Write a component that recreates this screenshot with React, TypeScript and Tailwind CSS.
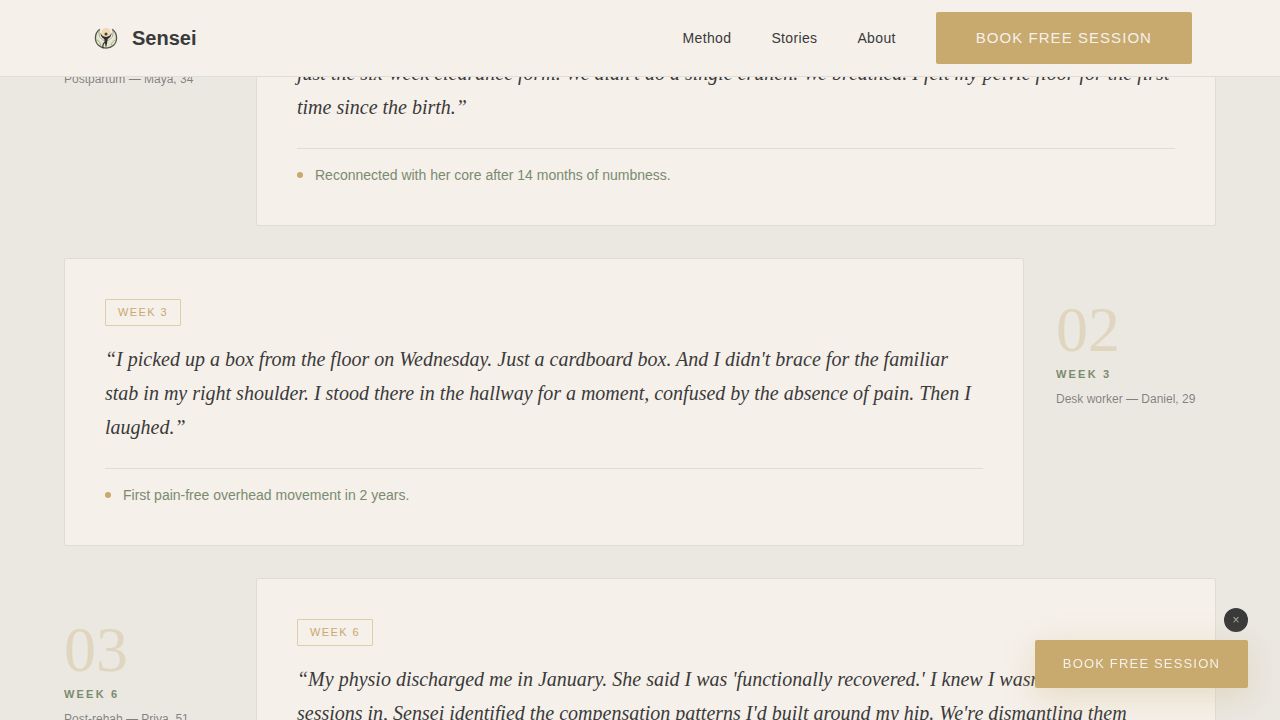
import React, { useState } from "react";

interface Story {
    number: string;
    week: string;
    person: string;
    quote: string;
    outcome: string;
}

const stories: Story[] = [
    {
        number: "01",
        week: "Week 1",
        person: "Postpartum — Maya, 34",
        quote: "For fourteen months nobody had ever really asked me how my body felt. There was no plan, no follow up, just the six-week clearance form. We didn't do a single crunch. We breathed. I felt my pelvic floor for the first time since the birth.",
        outcome: "Reconnected with her core after 14 months of numbness.",
    },
    {
        number: "02",
        week: "Week 3",
        person: "Desk worker — Daniel, 29",
        quote: "I picked up a box from the floor on Wednesday. Just a cardboard box. And I didn't brace for the familiar stab in my right shoulder. I stood there in the hallway for a moment, confused by the absence of pain. Then I laughed.",
        outcome: "First pain-free overhead movement in 2 years.",
    },
    {
        number: "03",
        week: "Week 6",
        person: "Post-rehab — Priya, 51",
        quote: "My physio discharged me in January. She said I was 'functionally recovered.' I knew I wasn't. Seventeen sessions in, Sensei identified the compensation patterns I'd built around my hip. We're dismantling them together.",
        outcome: "Walking without a limp.",
    },
];

const navLinks = [
    { label: "Method", href: "#method" },
    { label: "Stories", href: "#stories" },
    { label: "About", href: "#about" },
];

const Logo: React.FC = () => (
    <svg viewBox="0 0 36 36" className="h-9 w-9" fill="none" aria-hidden="true">
        <circle cx="18" cy="12.5" r="4.5" fill="#ecd09a" opacity="0.7" />
        <path
            d="M11.5 10C6.5 14 6.5 22 10.5 26C12.5 28 15 28.6 18 28.6C21 28.6 23.5 28 25.5 26C29.5 22 29.5 14 24.5 10C27 16.5 25 20.5 20 22L18 25L16 22C11 20.5 9 16.5 11.5 10Z"
            fill="#dfe2c4"
            opacity="0.8"
        />
        <path
            d="M11.5 9.5C6.2 13.5 6.2 21.8 10.8 25.6C14.5 29 21.5 29 25.2 25.6C29.8 21.8 29.8 13.5 24.5 9.5"
            stroke="#55574c"
            strokeWidth="1.3"
            strokeLinecap="round"
        />
        <path
            d="M11.5 9.5C10 14.5 11.5 19 16 20.5M24.5 9.5C26 14.5 24.5 19 20 20.5"
            stroke="#7d8468"
            strokeWidth="0.7"
            strokeLinecap="round"
        />
        <path
            d="M9 20C11 21 12.3 22.5 12.8 25M27 20C25 21 23.7 22.5 23.2 25"
            stroke="#8c9a6b"
            strokeWidth="0.7"
            strokeLinecap="round"
        />
        <circle cx="18" cy="14" r="1.5" fill="#4a4233" />
        <path
            d="M12.5 12.5C13.3 15.3 15.2 16.7 18 17C20.8 16.7 22.7 15.3 23.5 12.5C23.7 15.8 22 17.9 19.8 19L19.2 22.5L18 28L16.8 22.5L16.2 19C14 17.9 12.3 15.8 12.5 12.5Z"
            fill="#2f302b"
        />
        <path
            d="M17.2 22C15 23.5 14.5 25.5 15 28"
            stroke="#2f302b"
            strokeWidth="1.1"
            strokeLinecap="round"
        />
    </svg>
);

const StoryRow: React.FC<{ story: Story; reversed: boolean }> = ({
    story,
    reversed,
}) => (
    <article
        className={`flex gap-8 ${reversed ? "flex-row-reverse" : "flex-row"}`}
    >
        <div className="w-40 shrink-0 pt-10">
            <div className="font-['Liberation_Serif',serif] text-[64px] leading-16 text-[#c8a96e]/30">
                {story.number}
            </div>
            <div className="mt-1 text-[11px] leading-4 font-bold tracking-[0.2em] text-[#7a8b6f] uppercase">
                {story.week}
            </div>
            <div className="mt-2 text-xs leading-[18px] text-[#3a3a3a]/60">
                {story.person}
            </div>
        </div>

        <div className="min-w-0 flex-1 rounded-xs border border-[#e1ddd6] bg-[#f5f0ea] p-10">
            <div className="flex">
                <span className="rounded-[1px] border border-[#c8a96e]/50 px-3 py-1 text-[11px] leading-[17px] tracking-[0.13em] text-[#c8a96e] uppercase">
                    {story.week}
                </span>
            </div>
            <blockquote className="mt-4 font-['Liberation_Serif',serif] text-xl leading-[34px] text-[#3a3a3a] italic">
                {`“${story.quote}”`}
            </blockquote>
            <div className="mt-6 flex items-center gap-3 border-t border-[#e1ddd6] pt-4 text-sm leading-5 text-[#7a8b6f]">
                <span className="h-1.5 w-1.5 rounded-full bg-[#c8a96e]" />
                <p>{story.outcome}</p>
            </div>
        </div>
    </article>
);

const App: React.FC = () => {
    const [showCta, setShowCta] = useState(true);

    return (
        <div className="h-screen overflow-hidden bg-[#ebe8e2] font-['Liberation_Sans',Arial,sans-serif] text-[#3a3a3a]">
            <header className="fixed inset-x-0 top-0 z-10 border-b border-[#e1ddd6] bg-[#f5f0ea]">
                <div className="mx-auto flex max-w-6xl items-center justify-between px-6 py-3">
                    <a href="#top" className="flex items-center gap-2">
                        <Logo />
                        <span className="text-xl font-bold">Sensei</span>
                    </a>
                    <nav className="flex items-center gap-10">
                        {navLinks.map((link) => (
                            <a
                                key={link.label}
                                href={link.href}
                                className="text-sm tracking-wide"
                            >
                                {link.label}
                            </a>
                        ))}
                        <button
                            type="button"
                            className="rounded-xs bg-[#c8a96e] px-10 py-4 text-[15px] leading-5 tracking-[0.07em] text-[#f5f0ea] uppercase"
                        >
                            Book Free Session
                        </button>
                    </nav>
                </div>
            </header>

            <main
                id="stories"
                className="mx-auto -mt-[62px] flex max-w-6xl flex-col gap-8"
            >
                {stories.map((story, index) => (
                    <StoryRow
                        key={story.number}
                        story={story}
                        reversed={index % 2 === 1}
                    />
                ))}
            </main>

            {showCta && (
                <div className="fixed right-8 bottom-8 z-20 flex flex-col items-end gap-2">
                    <button
                        type="button"
                        aria-label="Dismiss"
                        onClick={() => setShowCta(false)}
                        className="flex h-6 w-6 items-center justify-center rounded-full bg-[#3a3a3a] text-xs text-[#f5f0ea]/60"
                    >
                        ×
                    </button>
                    <button
                        type="button"
                        className="rounded-xs bg-[#c8a96e] px-7 py-3 text-[13px] leading-6 tracking-[0.09em] text-[#f5f0ea] uppercase shadow-[0_8px_32px_rgba(200,169,110,0.3)]"
                    >
                        Book Free Session
                    </button>
                </div>
            )}
        </div>
    );
};

export default App;
